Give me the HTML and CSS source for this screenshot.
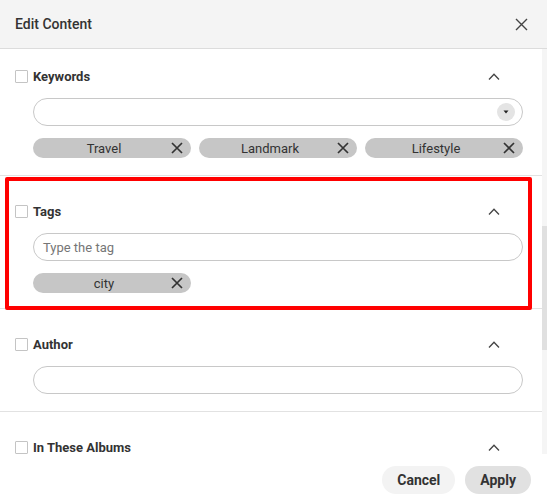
FILE: index.html
```html
<!DOCTYPE html>
<html>
<head>
<meta charset="utf-8">
<link rel="stylesheet" href="styles.css">
</head>
<body>
<div class="dialog">
  <header class="dlg-header">
    <h1 class="title">Edit Content</h1>
    <button class="close" aria-label="Close">
      <svg width="13" height="13" viewBox="0 0 13 13"><path d="M1 1 L12 12 M12 1 L1 12" stroke="#444" stroke-width="1.4" fill="none"/></svg>
    </button>
  </header>

  <div class="dlg-main">
    <div class="content">
      <section class="field first">
        <div class="field-head">
          <span class="checkbox"></span>
          <span class="label">Keywords</span>
          <svg class="chevron" width="12" height="7" viewBox="0 0 12 7"><path d="M1 6.5 L6 1.2 L11 6.5" stroke="#444" stroke-width="1.3" fill="none"/></svg>
        </div>
        <div class="input select">
          <span class="dd"><svg width="6" height="4" viewBox="0 0 6 4"><path d="M0.5 0.5 L5.5 0.5 L3 3.5 Z" fill="#222"/></svg></span>
        </div>
        <div class="chips">
          <span class="chip"><span class="chip-text">Travel</span><svg class="chip-x" width="12" height="12" viewBox="0 0 12 12"><path d="M1 1 L11 11 M11 1 L1 11" stroke="#333" stroke-width="1.7" fill="none"/></svg></span>
          <span class="chip"><span class="chip-text">Landmark</span><svg class="chip-x" width="12" height="12" viewBox="0 0 12 12"><path d="M1 1 L11 11 M11 1 L1 11" stroke="#333" stroke-width="1.7" fill="none"/></svg></span>
          <span class="chip"><span class="chip-text">Lifestyle</span><svg class="chip-x" width="12" height="12" viewBox="0 0 12 12"><path d="M1 1 L11 11 M11 1 L1 11" stroke="#333" stroke-width="1.7" fill="none"/></svg></span>
        </div>
      </section>

      <section class="field highlighted">
        <div class="field-head">
          <span class="checkbox"></span>
          <span class="label">Tags</span>
          <svg class="chevron" width="12" height="7" viewBox="0 0 12 7"><path d="M1 6.5 L6 1.2 L11 6.5" stroke="#444" stroke-width="1.3" fill="none"/></svg>
        </div>
        <div class="input"><span class="placeholder">Type the tag</span></div>
        <div class="chips">
          <span class="chip"><span class="chip-text">city</span><svg class="chip-x" width="12" height="12" viewBox="0 0 12 12"><path d="M1 1 L11 11 M11 1 L1 11" stroke="#333" stroke-width="1.7" fill="none"/></svg></span>
        </div>
        <div class="highlight-box"></div>
      </section>

      <section class="field">
        <div class="field-head">
          <span class="checkbox"></span>
          <span class="label">Author</span>
          <svg class="chevron" width="12" height="7" viewBox="0 0 12 7"><path d="M1 6.5 L6 1.2 L11 6.5" stroke="#444" stroke-width="1.3" fill="none"/></svg>
        </div>
        <div class="input"></div>
      </section>

      <section class="field">
        <div class="field-head">
          <span class="checkbox"></span>
          <span class="label">In These Albums</span>
          <svg class="chevron" width="12" height="7" viewBox="0 0 12 7"><path d="M1 6.5 L6 1.2 L11 6.5" stroke="#444" stroke-width="1.3" fill="none"/></svg>
        </div>
        <div class="input"></div>
      </section>
    </div>
    <div class="scrollbar"><div class="thumb"></div></div>
  </div>

  <footer class="dlg-footer">
    <button class="btn cancel">Cancel</button>
    <button class="btn apply">Apply</button>
  </footer>
</div>
</body>
</html>
```

FILE: styles.css
```css
* { box-sizing: border-box; }
html, body { margin: 0; padding: 0; background: #fff; }
body { font-family: Roboto, "Liberation Sans", sans-serif; color: #333; }

.dialog { width: 547px; height: 502px; display: flex; flex-direction: column; overflow: hidden; }

.dlg-header {
  height: 49px;
  flex: none;
  background: #f4f4f4;
  border-bottom: 1px solid #dcdcdc;
  display: flex;
  align-items: center;
  justify-content: space-between;
  padding: 0 19px 0 15px;
}
.title { margin: 0; font-size: 14px; font-weight: 500; color: #333; }
.close { border: 0; background: none; padding: 0; width: 14px; height: 14px; display: flex; align-items: center; justify-content: center; }

.dlg-main { height: 411px; flex: none; display: flex; }
.content { flex: 1; overflow: hidden; }
.scrollbar { width: 5px; flex: none; height: 405px; background: #f5f5f5; }
.thumb { margin-top: 177px; height: 124px; background: #e0e0e0; }

.field {
  position: relative;
  padding: 27px 19px 17px 15px;
  border-bottom: 1px solid #e2e2e2;
}
.field.first { padding-top: 19px; }
.field.highlighted { padding-bottom: 15px; }

.field-head { display: flex; align-items: center; height: 16px; }
.checkbox { width: 13px; height: 13px; border: 1px solid #c4c4c4; border-radius: 1px; background: #fff; flex: none; }
.label { flex: 1; margin-left: 5px; font-size: 13px; font-weight: 700; color: #333; }
.chevron { margin-right: 23px; flex: none; }

.input {
  margin: 14px 0 0 18px;
  height: 28px;
  border: 1px solid #c8c8c8;
  border-radius: 14px;
  display: flex;
  align-items: center;
  padding: 0 7px 0 9px;
}
.input.select { justify-content: flex-end; }
.placeholder { font-size: 13px; color: #767676; }
.dd { width: 18px; height: 18px; border-radius: 50%; background: #e4e4e4; display: flex; align-items: center; justify-content: center; }

.chips { display: flex; gap: 8px; margin: 12px 0 0 18px; }
.chip {
  width: 158px;
  height: 20px;
  border-radius: 10px;
  background: #c6c6c6;
  display: flex;
  align-items: center;
  padding: 0 8px 0 8px;
}
.chip-text { flex: 1; text-align: center; font-size: 13px; color: #333; }
.chip-x { margin-left: 4px; flex: none; }

.highlight-box {
  position: absolute;
  top: 1px;
  bottom: -2px;
  left: 5px;
  right: 10px;
  border: 4px solid #ff0000;
  border-radius: 2px;
  pointer-events: none;
}

.dlg-footer {
  flex: 1;
  display: flex;
  justify-content: flex-end;
  gap: 10px;
  padding: 6px 16px 0 0;
}
.btn {
  height: 28px;
  border: 0;
  border-radius: 14px;
  font-family: Roboto, "Liberation Sans", sans-serif;
  font-size: 14px;
  font-weight: 700;
  color: #333;
  padding: 0 15px;
}
.cancel { background: #f3f3f3; }
.apply { background: #e1e1e1; }
```
